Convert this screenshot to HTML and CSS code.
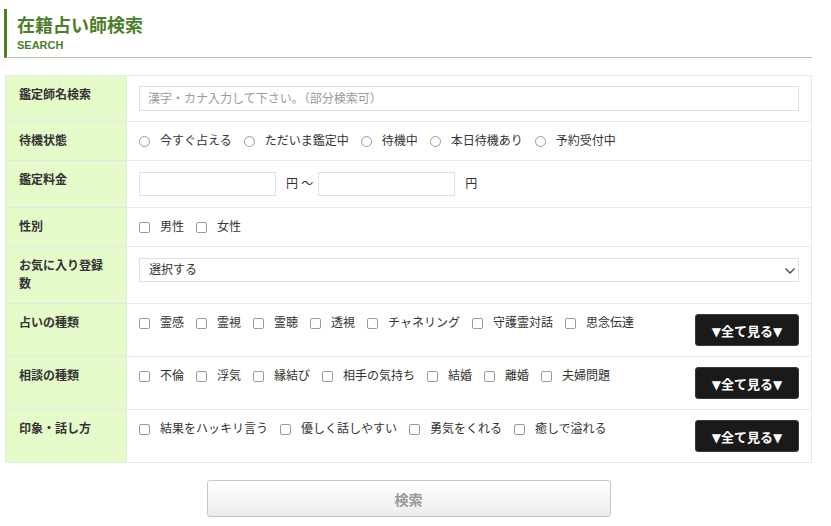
FILE: index.html
```html
<!DOCTYPE html>
<html lang="ja">
<head>
    <meta charset="UTF-8">
    <title>在籍占い師検索</title>
    <link rel="stylesheet" href="styles.css">
</head>
<body>
    <div class="wrap">
        <div class="page-head">
            <h2>在籍占い師検索</h2>
            <p>SEARCH</p>
        </div>

        <table class="search-table">
            <tr>
                <th>鑑定師名検索</th>
                <td><input class="text-full" type="text" placeholder="漢字・カナ入力して下さい。（部分検索可）"></td>
            </tr>
            <tr>
                <th>待機状態</th>
                <td>
                    <div class="opts">
                        <label><input type="radio" name="st">今すぐ占える</label>
                        <label><input type="radio" name="st">ただいま鑑定中</label>
                        <label><input type="radio" name="st">待機中</label>
                        <label><input type="radio" name="st">本日待機あり</label>
                        <label><input type="radio" name="st">予約受付中</label>
                    </div>
                </td>
            </tr>
            <tr>
                <th>鑑定料金</th>
                <td>
                    <div class="price">
                        <input type="text"><span class="yen">円 〜</span><input type="text"><span class="yen">円</span>
                    </div>
                </td>
            </tr>
            <tr>
                <th>性別</th>
                <td>
                    <div class="opts">
                        <label><input type="checkbox">男性</label>
                        <label><input type="checkbox">女性</label>
                    </div>
                </td>
            </tr>
            <tr>
                <th>お気に入り登録数</th>
                <td>
                    <div class="select-box">
                        <select><option>選択する</option></select>
                        <svg class="chev" width="12" height="8" viewBox="0 0 12 8"><path d="M1.5 1.5 L6 6 L10.5 1.5" fill="none" stroke="#444" stroke-width="1.3"/></svg>
                    </div>
                </td>
            </tr>
            <tr>
                <th>占いの種類</th>
                <td>
                    <div class="row-more">
                        <div class="opts">
                            <label><input type="checkbox">霊感</label>
                            <label><input type="checkbox">霊視</label>
                            <label><input type="checkbox">霊聴</label>
                            <label><input type="checkbox">透視</label>
                            <label><input type="checkbox">チャネリング</label>
                            <label><input type="checkbox">守護霊対話</label>
                            <label><input type="checkbox">思念伝達</label>
                        </div>
                        <button class="more-btn" type="button"><span class="tri">▼</span>全て見る<span class="tri">▼</span></button>
                    </div>
                </td>
            </tr>
            <tr>
                <th>相談の種類</th>
                <td>
                    <div class="row-more">
                        <div class="opts">
                            <label><input type="checkbox">不倫</label>
                            <label><input type="checkbox">浮気</label>
                            <label><input type="checkbox">縁結び</label>
                            <label><input type="checkbox">相手の気持ち</label>
                            <label><input type="checkbox">結婚</label>
                            <label><input type="checkbox">離婚</label>
                            <label><input type="checkbox">夫婦問題</label>
                        </div>
                        <button class="more-btn" type="button"><span class="tri">▼</span>全て見る<span class="tri">▼</span></button>
                    </div>
                </td>
            </tr>
            <tr>
                <th>印象・話し方</th>
                <td>
                    <div class="row-more">
                        <div class="opts">
                            <label><input type="checkbox">結果をハッキリ言う</label>
                            <label><input type="checkbox">優しく話しやすい</label>
                            <label><input type="checkbox">勇気をくれる</label>
                            <label><input type="checkbox">癒しで溢れる</label>
                        </div>
                        <button class="more-btn" type="button"><span class="tri">▼</span>全て見る<span class="tri">▼</span></button>
                    </div>
                </td>
            </tr>
        </table>

        <div class="submit-area">
            <button class="search-btn" type="button">検索</button>
        </div>
    </div>
</body>
</html>
```

FILE: styles.css
```css
body {
    margin: 0;
    background-color: #ffffff;
    font-family: "Liberation Sans", "Noto Sans CJK JP", sans-serif;
    color: #333333;
}
.wrap {
    width: 808px;
    padding: 9px 0 0 4px;
}
.page-head {
    border-left: 3px solid #4d7f2a;
    border-bottom: 1px solid #b3c8a4;
    padding: 5px 0 5px 10px;
}
.page-head h2 {
    margin: 0;
    font-size: 18px;
    line-height: 24px;
    color: #4d7f2a;
    font-weight: bold;
}
.page-head p {
    margin: 0;
    font-size: 11px;
    line-height: 14px;
    font-weight: bold;
    color: #4d7f2a;
}
.search-table {
    width: 807px;
    margin: 17px 0 0 1px;
    border-collapse: collapse;
    table-layout: fixed;
    font-size: 12px;
}
.search-table th,
.search-table td {
    border: 1px solid #e8e8e8;
    padding: 10px 12px;
    line-height: 18px;
    vertical-align: top;
    text-align: left;
}
.search-table th {
    width: 95px;
    padding-left: 13px;
    background-color: #e6fbca;
    font-weight: bold;
    color: #333333;
}
.text-full {
    display: block;
    width: 100%;
    height: 25px;
    box-sizing: border-box;
    border: 1px solid #e0e0e0;
    padding: 0 8px;
    font-family: inherit;
    font-size: 12px;
    color: #333333;
    outline: none;
}
.text-full::placeholder {
    color: #9a9a9a;
}
.opts {
    display: flex;
    flex-wrap: wrap;
    column-gap: 12px;
}
.opts label {
    display: flex;
    align-items: center;
    white-space: nowrap;
}
.opts input {
    appearance: none;
    -webkit-appearance: none;
    width: 11px;
    height: 11px;
    margin: 0 10px 0 0;
    border: 1px solid #9a9a9a;
    background-color: #ffffff;
    box-sizing: border-box;
}
.opts input[type="checkbox"] {
    border-radius: 2px;
}
.opts input[type="radio"] {
    border-radius: 50%;
}
.price {
    display: flex;
    align-items: center;
    padding: 1px 0;
}
.price input {
    width: 137px;
    height: 24px;
    box-sizing: border-box;
    border: 1px solid #e0e0e0;
    outline: none;
}
.price .yen {
    margin: 0 5px 0 10px;
    white-space: nowrap;
}
.select-box {
    position: relative;
    padding-top: 1px;
}
.select-box select {
    appearance: none;
    -webkit-appearance: none;
    display: block;
    width: 100%;
    height: 24px;
    border: 1px solid #e0e0e0;
    border-radius: 0;
    background-color: #ffffff;
    padding: 0 9px;
    font-family: inherit;
    font-size: 12px;
    color: #333333;
}
.chev {
    position: absolute;
    right: 3px;
    top: 10px;
}
.row-more {
    display: flex;
    align-items: flex-start;
}
.row-more .opts {
    flex: 1;
}
.more-btn {
    flex-shrink: 0;
    width: 104px;
    height: 32px;
    margin-left: 10px;
    padding: 0;
    background-color: #1a1a1a;
    border: 1px solid #3a3a3a;
    border-radius: 3px;
    color: #ffffff;
    font-family: "Noto Sans CJK JP", sans-serif;
    font-size: 13px;
    font-weight: bold;
    cursor: pointer;
}
.more-btn .tri {
    font-family: "DejaVu Sans", sans-serif;
    font-size: 12px;
}
.submit-area {
    display: flex;
    justify-content: center;
    padding: 17px 0 0 1px;
}
.search-btn {
    width: 404px;
    height: 37px;
    background: linear-gradient(#ffffff, #ececec);
    border: 1px solid #c8c8c8;
    border-radius: 3px;
    color: #9a9a9a;
    font-family: inherit;
    font-size: 14px;
    font-weight: bold;
    cursor: pointer;
}
```
